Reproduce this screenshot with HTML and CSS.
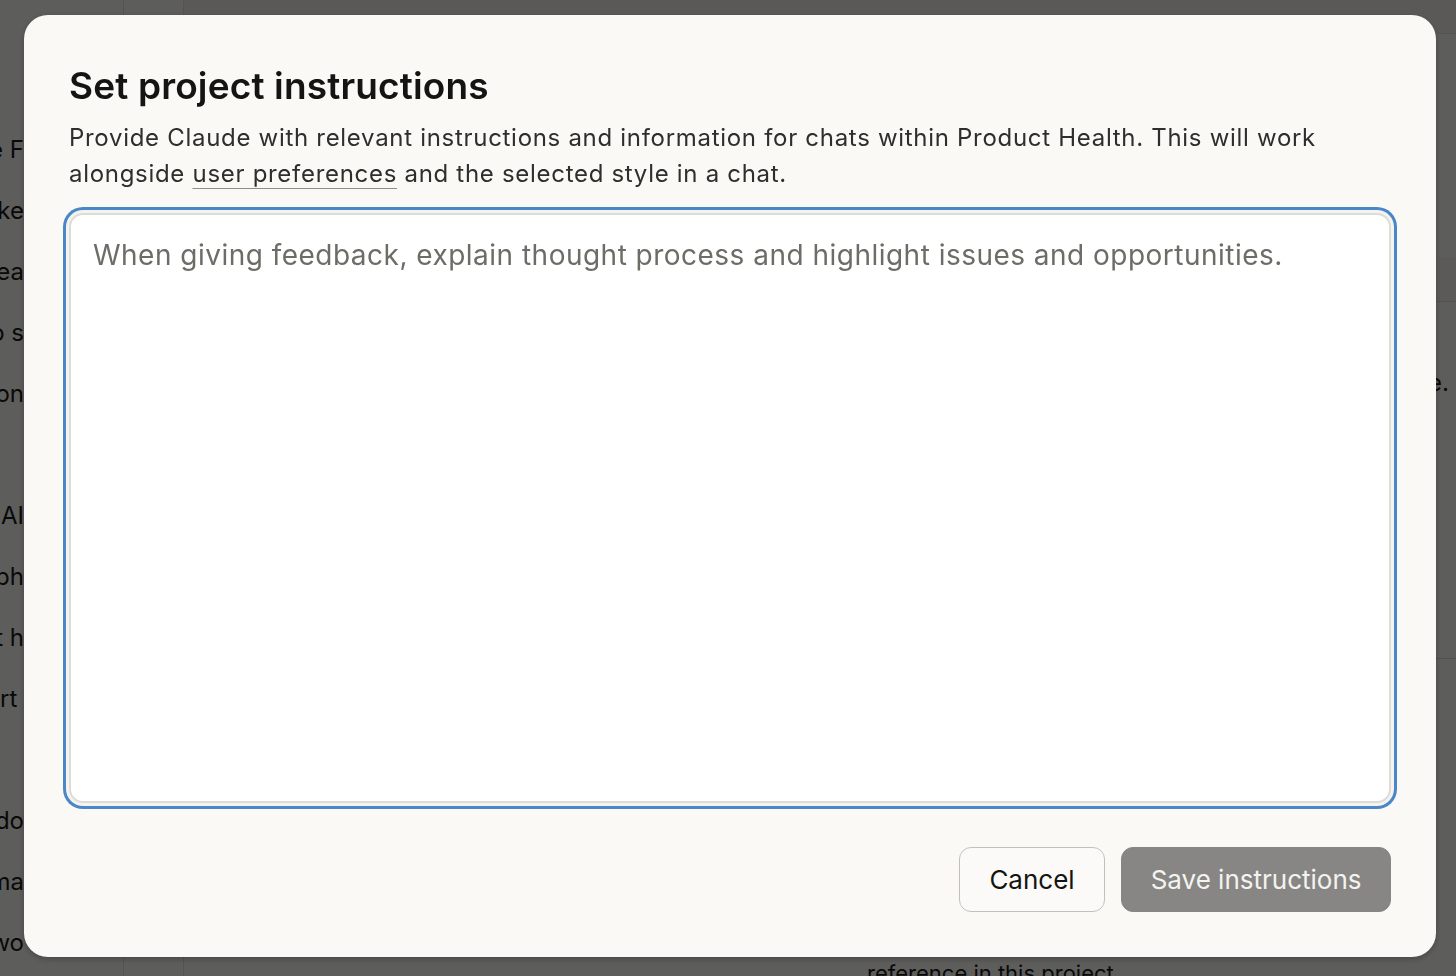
FILE: index.html
```html
<!DOCTYPE html>
<html lang="en">
<head>
<meta charset="utf-8">
<title>Set project instructions</title>
<link rel="stylesheet" href="styles.css">
</head>
<body>
<div class="app">
  <aside class="sidebar">
    <ul class="chat-list">
      <li><span class="pre">Pricing notes from the F</span></li>
      <li><span class="pre">Summary for stake</span></li>
      <li><span class="pre">Brainstorm idea</span></li>
      <li><span class="pre">How to s</span></li>
      <li><span class="pre">Questions on</span></li>
      <li class="blank"></li>
      <li><span class="pre">Research on AI</span></li>
      <li><span class="pre">Usage graph</span></li>
      <li><span class="pre">Account h</span></li>
      <li><span class="pre">Weekly report </span></li>
      <li class="blank"></li>
      <li><span class="pre">Release notes do</span></li>
      <li><span class="pre">Launch ma</span></li>
      <li><span class="pre">Feature request wo</span></li>
    </ul>
  </aside>
  <div class="rail"></div>
  <main class="main">
    <div class="main-head"></div>
    <div class="main-body">
      <div class="knowledge">
        <div class="k-row k-row-a"></div>
        <div class="k-row k-row-b"><span class="k-text">e.</span></div>
      </div>
      <p class="foot-note">reference in this project</p>
    </div>
  </main>
</div>

<div class="scrim"></div>

<div class="modal" role="dialog" aria-labelledby="modal-title">
  <h1 id="modal-title" class="modal-title">Set project instructions</h1>
  <p class="modal-desc">Provide Claude with relevant instructions and information for chats within Product Health. This will work alongside <a class="link" href="#">user preferences</a> and the selected style in a chat.</p>
  <textarea class="instructions" placeholder="When giving feedback, explain thought process and highlight issues and opportunities."></textarea>
  <div class="modal-actions">
    <button class="btn btn-cancel" type="button">Cancel</button>
    <button class="btn btn-save" type="button">Save instructions</button>
  </div>
</div>
</body>
</html>
```

FILE: styles.css
```css
* { box-sizing: border-box; }

html, body {
  margin: 0;
  padding: 0;
  height: 100%;
}

body {
  font-family: Inter, "Noto Sans", "Liberation Sans", sans-serif;
  background: #f5f4ef;
  color: #141413;
  overflow: hidden;
}

/* ---------- underlying page ---------- */
.app {
  display: flex;
  height: 976px;
}

.sidebar {
  width: 124px;
  flex: none;
  border-right: 1px solid #dcdad3;
  display: flex;
  flex-direction: column;
}

.chat-list {
  list-style: none;
  margin: 119px 0 0 0;
  padding: 0;
  width: 24px;
}

.chat-list li {
  height: 61px;
  display: flex;
  align-items: center;
  justify-content: flex-end;
  font-size: 24px;
  color: #1a1a19;
}

.chat-list .pre {
  flex: none;
  white-space: pre;
}

.rail {
  width: 60px;
  flex: none;
  border-right: 1px solid #dcdad3;
}

.main {
  flex: 1;
  display: flex;
  flex-direction: column;
}

.main-head {
  height: 34px;
  flex: none;
  background: #ecebe5;
  border-bottom: 1px solid #dcdad3;
}

.main-body {
  flex: 1;
  display: flex;
  flex-direction: column;
}

.knowledge {
  margin-left: auto;
  width: 640px;
  display: flex;
  flex-direction: column;
  margin-top: 223px;
}

.k-row {
  border-bottom: 1px solid #d6d4cd;
}

.k-row-a { height: 45px; background: #eeede7; }

.k-row-b {
  height: 357px;
  display: flex;
  justify-content: flex-end;
  padding: 66px 7px 0 0;
  font-size: 24px;
  line-height: 30px;
  color: #1a1a19;
}

.foot-note {
  margin: auto 0 -10px 683px;
  font-size: 22px;
  color: #1a1a19;
  white-space: nowrap;
}

/* ---------- overlay ---------- */
.scrim {
  position: fixed;
  inset: 0;
  background: rgba(0, 0, 0, 0.62);
}

.modal {
  position: fixed;
  left: 24px;
  top: 15px;
  width: 1412px;
  height: 942px;
  background: #faf9f6;
  border-radius: 24px;
  box-shadow: 0 2px 6px rgba(0, 0, 0, 0.25);
  padding: 49px 45px 45px 45px;
  display: flex;
  flex-direction: column;
}

.modal-title {
  margin: 0;
  font-size: 37px;
  line-height: 44px;
  font-weight: 600;
  letter-spacing: 0.15px;
  color: #141413;
}

.modal-desc {
  margin: 12px 0 0 0;
  font-size: 24px;
  line-height: 36px;
  letter-spacing: 0.7px;
  color: #2e2e2c;
}

.link {
  color: inherit;
  text-decoration: underline;
  text-decoration-color: #8e8d88;
  text-decoration-thickness: 1px;
  text-underline-offset: 6px;
}

.instructions {
  margin-top: 21px;
  height: 590px;
  width: 100%;
  resize: none;
  font-family: inherit;
  font-size: 28px;
  line-height: 42px;
  letter-spacing: 0.48px;
  color: #141413;
  background: #ffffff;
  border: 2px solid #dddcd7;
  border-radius: 14px;
  padding: 19px 22px;
  outline: none;
  box-shadow: 0 0 0 3px #f4f3ef, 0 0 0 6px #4a87c9;
}

.instructions::placeholder {
  color: #6d6c67;
  opacity: 1;
}

.modal-actions {
  margin-top: 44px;
  display: flex;
  justify-content: flex-end;
  gap: 16px;
}

.btn {
  height: 65px;
  border-radius: 12px;
  font-family: inherit;
  font-size: 26px;
  cursor: pointer;
}

.btn-cancel {
  padding: 0 29.5px;
  background: #fbfaf8;
  border: 1px solid #c2c0b9;
  color: #141413;
}

.btn-save {
  padding: 0 28.5px;
  background: #878684;
  border: 1px solid #878684;
  color: #f4f3ef;
}
```
